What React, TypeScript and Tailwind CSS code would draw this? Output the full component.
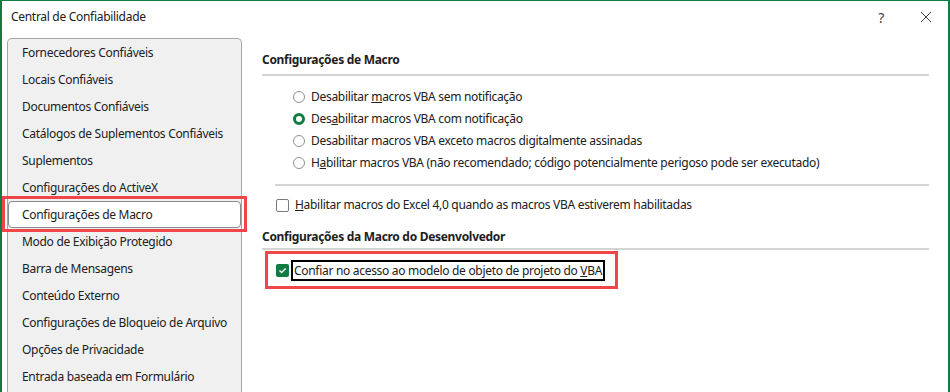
import type { ReactNode } from 'react'

const navItems = [
  'Fornecedores Confiáveis',
  'Locais Confiáveis',
  'Documentos Confiáveis',
  'Catálogos de Suplementos Confiáveis',
  'Suplementos',
  'Configurações do ActiveX',
  'Configurações de Macro',
  'Modo de Exibição Protegido',
  'Barra de Mensagens',
  'Conteúdo Externo',
  'Configurações de Bloqueio de Arquivo',
  'Opções de Privacidade',
  'Entrada baseada em Formulário',
]

function Radio({ checked, children }: { checked?: boolean; children: ReactNode }) {
  return (
    <div className="flex items-center h-[22px]">
      {checked ? (
        <span className="w-[12px] h-[12px] rounded-full border-[3px] border-[#107c41] bg-white" />
      ) : (
        <span className="w-[12px] h-[12px] rounded-full border border-[#8f8f8f] bg-white" />
      )}
      <span className="ml-[6px]">{children}</span>
    </div>
  )
}

export default function App() {
  return (
    <div
      className="w-[950px] h-[392px] overflow-hidden bg-white text-[12px] tracking-[-0.3px] text-[#202020] border-x-2 border-t border-[#107c41] flex flex-col"
      style={{ fontFamily: '"Noto Sans", "Segoe UI", sans-serif' }}
    >
      <div className="h-[37px] flex items-center justify-between pl-[9px] pr-[12px]">
        <span className="-mt-[5px]">Central de Confiabilidade</span>
        <div className="flex items-center gap-[36px] -mt-[5px] text-[#404040]">
          <span className="text-[14px]">?</span>
          <svg width="12" height="12" viewBox="0 0 12 12" className="mr-[4px]">
            <path d="M1 1 L11 11 M11 1 L1 11" stroke="#404040" strokeWidth="1" />
          </svg>
        </div>
      </div>

      <div className="flex flex-1 min-h-0">
        <div className="ml-[5px] w-[235px] rounded-t-[5px] border border-b-0 border-[#a6a6a6] bg-[#f0f0f0] flex flex-col">
          {navItems.map((item) => {
            const selected = item === 'Configurações de Macro'
            return (
              <div key={item} className="relative h-[27px] shrink-0">
                {selected && (
                  <div className="absolute -left-[6px] -right-[6px] -top-[5px] -bottom-[4px] border-[3px] border-[#f04549]" />
                )}
                <div
                  className={
                    selected
                      ? 'h-full flex items-center pl-[13px] bg-white border border-[#8a8a8a] rounded-[4px]'
                      : 'h-full flex items-center pl-[14px]'
                  }
                >
                  {item}
                </div>
              </div>
            )
          })}
        </div>

        <div className="flex-1 pl-[20px] pr-[19px] flex flex-col">
          <div className="font-bold h-[28px] mt-[8px] flex items-center">Configurações de Macro</div>
          <div className="h-[2px] bg-[#d4d4d4]" />

          <div className="pl-[31px] pt-[10px] flex flex-col">
            <Radio>
              Desabilitar <u>m</u>acros VBA sem notificação
            </Radio>
            <Radio checked>
              Des<u>a</u>bilitar macros VBA com notificação
            </Radio>
            <Radio>
              Desabilitar macros VBA exceto macros di<u>g</u>italmente assinadas
            </Radio>
            <Radio>
              H<u>a</u>bilitar macros VBA (não recomendado; código potencialmente perigoso pode ser executado)
            </Radio>
          </div>

          <div className="ml-[13px] mt-[10px] h-[2px] bg-[#d4d4d4]" />

          <div className="ml-[14px] mt-[10px] h-[18px] flex items-center">
            <span className="w-[13px] h-[13px] rounded-[2px] border border-[#7a7a7a] bg-white" />
            <span className="ml-[6px]">
              <u>H</u>abilitar macros do Excel 4,0 quando as macros VBA estiverem habilitadas
            </span>
          </div>

          <div className="font-bold h-[22px] mt-[12px] flex items-center">
            Configurações da Macro do Desenvolvedor
          </div>
          <div className="h-[2px] bg-[#d4d4d4]" />

          <div className="ml-[3px] mt-[1px] w-[353px] h-[38px] border-[3px] border-[#f04549] flex items-center pl-[8px]">
            <span className="w-[13px] h-[13px] rounded-[2px] bg-[#107c41] flex items-center justify-center">
              <svg width="9" height="9" viewBox="0 0 9 9">
                <path d="M1.5 4.6 L3.6 6.6 L7.6 2.4" stroke="white" strokeWidth="1.4" fill="none" />
              </svg>
            </span>
            <span className="ml-[2px] border-2 border-black px-[1px] leading-[17px] whitespace-nowrap">
              Confiar no acesso ao modelo de objeto de projeto do <u>V</u>BA
            </span>
          </div>
        </div>
      </div>
    </div>
  )
}
